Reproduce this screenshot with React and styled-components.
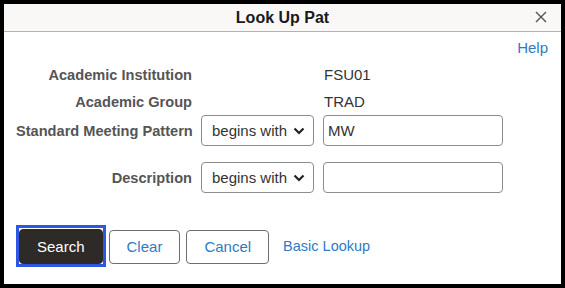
import React from 'react';
import styled, { createGlobalStyle } from 'styled-components';

const GlobalStyle = createGlobalStyle`
  html, body {
    margin: 0;
    padding: 0;
    background: #000;
    font-family: "Liberation Sans", Arial, sans-serif;
  }
`;

const Dialog = styled.div`
  margin: 4px;
  height: 280px;
  background: #fff;
  display: flex;
  flex-direction: column;
`;

const Header = styled.div`
  height: 27px;
  background: #f9f8f7;
  border-bottom: 1px solid #b3b3b3;
  display: flex;
  align-items: center;
  justify-content: center;
  position: relative;
`;

const Title = styled.h1`
  margin: 0;
  font-size: 16px;
  font-weight: bold;
  color: #1a1a1a;
`;

const CloseButton = styled.button`
  position: absolute;
  right: 13px;
  top: 6px;
  width: 14px;
  height: 14px;
  padding: 0;
  border: none;
  background: none;
  display: flex;
`;

const HelpRow = styled.div`
  display: flex;
  justify-content: flex-end;
  padding: 7px 13px 0 0;
`;

const Link = styled.a`
  color: #2e7bc4;
  font-size: ${props => props.$size || 15}px;
  line-height: 17px;
  text-decoration: none;
  cursor: pointer;
`;

const Form = styled.div`
  padding: 5px 0 0 12px;
  display: flex;
  flex-direction: column;
`;

const FieldRow = styled.div`
  display: grid;
  grid-template-columns: 176px 113px 180px;
  column-gap: 9px;
  align-items: center;
  height: ${props => props.$height}px;
  margin-top: ${props => props.$gap || 0}px;
`;

const Label = styled.div`
  text-align: right;
  font-size: 14.6px;
  font-weight: bold;
  color: #555;
  white-space: nowrap;
`;

const Value = styled.div`
  grid-column: 3;
  padding-left: 1px;
  font-size: 15px;
  color: #333;
`;

const SelectBox = styled.div`
  box-sizing: border-box;
  height: 31px;
  border: 1px solid #8d8d8d;
  border-radius: 4px;
  display: flex;
  align-items: center;
  justify-content: space-between;
  padding: 0 8px 0 10px;
  font-size: 15px;
  color: #333;
`;

const TextInput = styled.input`
  box-sizing: border-box;
  width: 180px;
  height: 31px;
  border: 1px solid #8d8d8d;
  border-radius: 4px;
  padding: 0 4px;
  font-family: "Liberation Sans", Arial, sans-serif;
  font-size: 15px;
  color: #333;
  outline: none;
`;

const ButtonRow = styled.div`
  display: flex;
  align-items: center;
  padding: 36px 0 0 15px;
`;

const Button = styled.button`
  position: relative;
  box-sizing: border-box;
  height: ${props => (props.$primary ? 35 : 34)}px;
  padding: 0 17px;
  margin-right: ${props => props.$space}px;
  border-radius: 4px;
  border: 1px solid ${props => (props.$primary ? '#2d2a27' : '#6e6e6e')};
  background: ${props => (props.$primary ? '#2d2a27' : '#fff')};
  color: ${props => (props.$primary ? '#fff' : '#2e7bc4')};
  font-family: "Liberation Sans", Arial, sans-serif;
  font-size: 15px;
  outline: none;

  ${props => props.$focused && `
    &::after {
      content: '';
      position: absolute;
      top: -5px;
      bottom: -4px;
      left: -4px;
      right: -4px;
      border: 3px solid #2f55e4;
    }
  `}
`;

function Chevron() {
  return (
    <svg width="12" height="8" viewBox="0 0 12 8">
      <polyline points="1.5,1.5 6,6 10.5,1.5" fill="none" stroke="#222" strokeWidth="2.2" />
    </svg>
  );
}

function OperatorSelect() {
  return (
    <SelectBox>
      <span>begins with</span>
      <Chevron />
    </SelectBox>
  );
}

export default function App() {
  return (
    <>
      <GlobalStyle />
      <Dialog>
        <Header>
          <Title>Look Up Pat</Title>
          <CloseButton aria-label="Close">
            <svg width="14" height="14" viewBox="0 0 14 14">
              <path d="M2 2 L12 12 M12 2 L2 12" stroke="#555" strokeWidth="1.4" />
            </svg>
          </CloseButton>
        </Header>
        <HelpRow>
          <Link>Help</Link>
        </HelpRow>
        <Form>
          <FieldRow $height={27}>
            <Label>Academic Institution</Label>
            <Value>FSU01</Value>
          </FieldRow>
          <FieldRow $height={27}>
            <Label>Academic Group</Label>
            <Value>TRAD</Value>
          </FieldRow>
          <FieldRow $height={31}>
            <Label>Standard Meeting Pattern</Label>
            <OperatorSelect />
            <TextInput defaultValue="MW" />
          </FieldRow>
          <FieldRow $height={31} $gap={16}>
            <Label>Description</Label>
            <OperatorSelect />
            <TextInput defaultValue="" />
          </FieldRow>
        </Form>
        <ButtonRow>
          <Button $primary $focused $space={6}>Search</Button>
          <Button $space={6}>Clear</Button>
          <Button $space={14}>Cancel</Button>
          <Link $size={14.5}>Basic Lookup</Link>
        </ButtonRow>
      </Dialog>
    </>
  );
}
